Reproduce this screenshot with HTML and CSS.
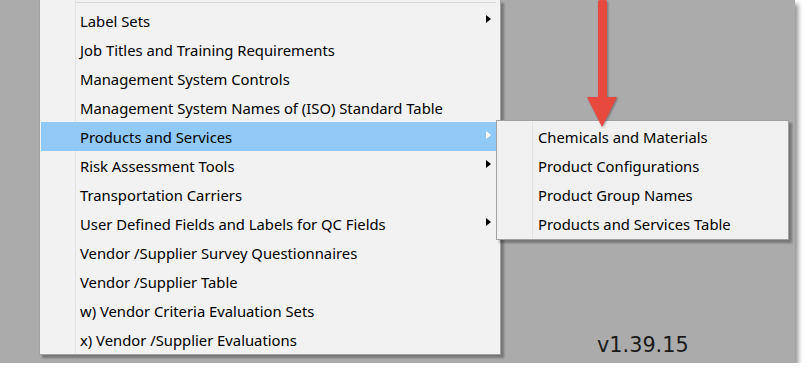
FILE: index.html
```html
<!DOCTYPE html>
<html lang="en">

<head>
    <meta charset="UTF-8">
    <meta name="viewport" content="width=device-width, initial-scale=1.0">
    <title>Menu</title>
    <link rel="stylesheet" href="styles.css">
</head>

<body>
    <div class="janela">
        <div class="menu">
            <div class="separador"></div>
            <div class="item sub">Label Sets</div>
            <div class="item">Job Titles and Training Requirements</div>
            <div class="item">Management System Controls</div>
            <div class="item">Management System Names of (ISO) Standard Table</div>
            <div class="item sub ativo">Products and Services</div>
            <div class="item sub">Risk Assessment Tools</div>
            <div class="item">Transportation Carriers</div>
            <div class="item sub">User Defined Fields and Labels for QC Fields</div>
            <div class="item">Vendor /Supplier Survey Questionnaires</div>
            <div class="item">Vendor /Supplier Table</div>
            <div class="item">w) Vendor Criteria Evaluation Sets</div>
            <div class="item">x) Vendor /Supplier Evaluations</div>
        </div>

        <div class="submenu">
            <div class="item">Chemicals and Materials</div>
            <div class="item">Product Configurations</div>
            <div class="item">Product Group Names</div>
            <div class="item">Products and Services Table</div>
        </div>

        <svg class="seta" width="40" height="132" viewBox="0 0 40 132">
            <rect x="13" y="0" width="9" height="100" rx="2" fill="#e8493f" />
            <polygon points="2,97 32,97 17,127" fill="#e8493f" />
        </svg>

        <div class="versao">v1.39.15</div>
    </div>
</body>

</html>
```
FILE: styles.css
```css
body {
    margin: 0;
    padding: 0;
    background-color: #ffffff;
}

* {
    box-sizing: border-box;
}

.janela {
    position: relative;
    width: 795px;
    height: 363px;
    background-color: #ababab;
    box-shadow: 3px 4px 5px rgba(0, 0, 0, 0.45);
}

.menu {
    position: absolute;
    left: 39px;
    top: 0;
    width: 462px;
    height: 355px;
    padding: 2px 4px 0 1px;
    background: linear-gradient(#e2e2e2, #e2e2e2) 35px 0 / 1px 100% no-repeat, #f2f2f2;
    border: 1px solid #a0a0a0;
    border-top: none;
    box-shadow: 3px 3px 2px rgba(0, 0, 0, 0.3);
    font-family: 'Noto Sans', sans-serif;
}

.separador {
    height: 1px;
    margin: 0 0 3px 35px;
    background-color: #d7d7d7;
}

.item {
    position: relative;
    height: 29px;
    line-height: 28px;
    padding-top: 1px;
    padding-left: 39px;
    font-size: 14.8px;
    color: #000;
    white-space: nowrap;
}

.item.ativo {
    background-color: #91c9f7;
}

.sub::after {
    content: '';
    position: absolute;
    right: 5px;
    top: 9px;
    border-left: 5px solid #000;
    border-top: 4.5px solid transparent;
    border-bottom: 4.5px solid transparent;
}

.ativo::after {
    border-left-color: #fff;
}

.submenu {
    position: absolute;
    left: 496px;
    top: 120px;
    width: 293px;
    height: 120px;
    padding: 1px;
    background: linear-gradient(#e2e2e2, #e2e2e2) 35px 0 / 1px 100% no-repeat, #f0f0f0;
    border: 1px solid #a0a0a0;
    box-shadow: 3px 3px 2px rgba(0, 0, 0, 0.3);
    font-family: 'Noto Sans', sans-serif;
}

.submenu .item {
    padding-left: 40px;
}

.seta {
    position: absolute;
    left: 585px;
    top: 0;
    filter: drop-shadow(1px 1px 1px rgba(0, 0, 0, 0.35));
}

.versao {
    position: absolute;
    left: 597px;
    top: 333px;
    font-family: 'DejaVu Sans', sans-serif;
    font-size: 20.8px;
    color: #1a1a1a;
}
```
